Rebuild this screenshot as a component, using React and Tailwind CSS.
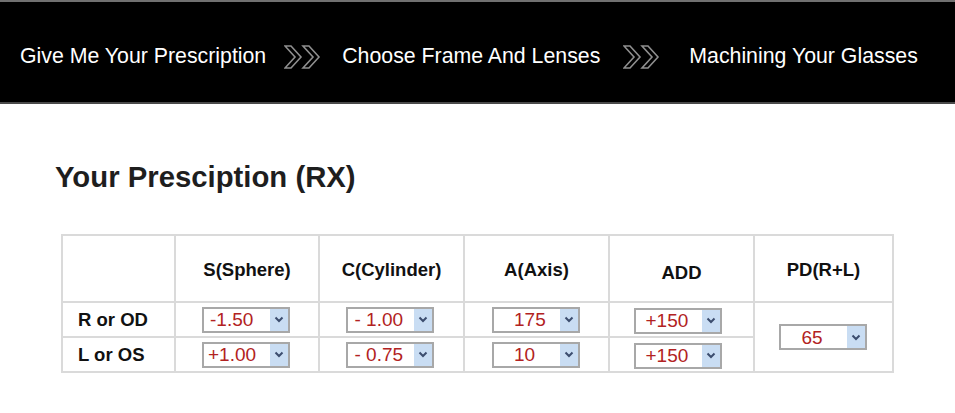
import React from "react";

const Chevrons = ({ cls }) => (
  <svg width="40" height="24" viewBox="0 0 40 24" className={cls}>
    <polygon points="1,1 7,1 17,12 7,23 1,23 11,12" fill="none" stroke="#8f8f8f" strokeWidth="1.6" strokeLinejoin="miter" />
    <polygon points="19,1 25,1 35,12 25,23 19,23 29,12" fill="none" stroke="#8f8f8f" strokeWidth="1.6" strokeLinejoin="miter" />
  </svg>
);

const Sel = ({ value, pad = "pl-[6px]" }) => (
  <div className="inline-flex items-stretch w-[88px] h-[26px] border-2 border-[#a8a8a8] bg-white">
    <div className={`flex-1 flex items-center text-[19px] leading-none text-[#b22222] ${pad}`}>{value}</div>
    <div className="w-[18px] bg-[#c9ddf3] flex items-center justify-center">
      <svg width="10" height="7" viewBox="0 0 10 7">
        <polyline points="1.5,1.5 5,5 8.5,1.5" fill="none" stroke="#3c4d6e" strokeWidth="2" />
      </svg>
    </div>
  </div>
);

export default function App() {
  const font = { fontFamily: '"Liberation Sans", Arial, sans-serif' };
  const th = "border-2 border-[#dadada] text-[18.5px] font-bold text-[#111] text-center align-middle";
  const td = "border-2 border-[#dadada] text-center align-middle p-0";
  const lbl = `${td} text-left pl-[15px] text-[18.5px] font-bold text-[#111]`;
  return (
    <div className="w-[955px] h-[413px] bg-white overflow-hidden" style={font}>
      <div className="h-[104px] bg-black border-t-2 border-[#707070] border-b-2 border-b-[#4a4a4a] flex items-center pl-[20px] pt-[9px] text-white text-[21.3px] whitespace-nowrap">
        <span>Give Me Your Prescription</span>
        <Chevrons cls="ml-[18px] mr-[18px]" />
        <span>Choose Frame And Lenses</span>
        <Chevrons cls="ml-[23px] mr-[26px]" />
        <span>Machining Your Glasses</span>
      </div>
      <h1 className="ml-[55px] mt-[58px] text-[29.3px] leading-none font-bold text-[#1e1e1e]">Your Presciption (RX)</h1>
      <table className="ml-[61px] mt-[43px] border-collapse table-fixed w-[831px]">
        <colgroup>
          <col className="w-[113px]" />
          <col className="w-[144px]" />
          <col className="w-[145px]" />
          <col className="w-[145px]" />
          <col className="w-[145px]" />
          <col className="w-[139px]" />
        </colgroup>
        <thead>
          <tr className="h-[67px]">
            <th className={th}></th>
            <th className={`${th} pt-[2px]`}>S(Sphere)</th>
            <th className={`${th} pt-[2px]`}>C(Cylinder)</th>
            <th className={`${th} pt-[2px]`}>A(Axis)</th>
            <th className={`${th} pt-[9px]`}>ADD</th>
            <th className={`${th} pt-[2px]`}>PD(R+L)</th>
          </tr>
        </thead>
        <tbody>
          <tr className="h-[35px]">
            <td className={lbl}>R or OD</td>
            <td className={td}><div className="flex justify-center pr-[2px]"><Sel value="-1.50" /></div></td>
            <td className={td}><div className="flex justify-center pr-[4px]"><Sel value="- 1.00" pad="pl-[7px]" /></div></td>
            <td className={td}><div className="flex justify-center pr-[1px]"><Sel value="175" pad="pl-[20px]" /></div></td>
            <td className={td}><div className="flex justify-center pt-[2px] pr-[8px]"><Sel value="+150" pad="pl-[10px]" /></div></td>
            <td className={td} rowSpan={2}><div className="flex justify-center pr-[2px]"><Sel value="65" pad="pl-[21px]" /></div></td>
          </tr>
          <tr className="h-[35px]">
            <td className={lbl}>L or OS</td>
            <td className={td}><div className="flex justify-center pr-[2px]"><Sel value="+1.00" pad="pl-[4px]" /></div></td>
            <td className={td}><div className="flex justify-center pr-[4px]"><Sel value="- 0.75" pad="pl-[7px]" /></div></td>
            <td className={td}><div className="flex justify-center pr-[1px]"><Sel value="10" pad="pl-[20px]" /></div></td>
            <td className={td}><div className="flex justify-center pt-[2px] pr-[8px]"><Sel value="+150" pad="pl-[10px]" /></div></td>
          </tr>
        </tbody>
      </table>
    </div>
  );
}
